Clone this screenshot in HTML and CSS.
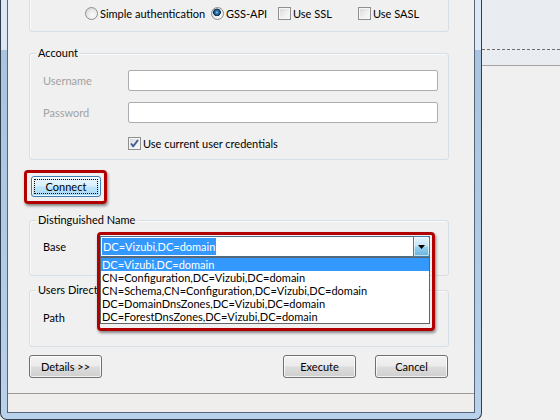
FILE: index.html
```html
<!DOCTYPE html>
<html>
<head>
<meta charset="utf-8">
<title>LDAP connection</title>
<link rel="stylesheet" href="styles.css">
</head>
<body>
<div class="window">
  <div class="client">
    <div class="group group-auth">
      <div class="auth-row">
        <label class="opt"><span class="radio"></span>Simple authentication</label>
        <label class="opt"><span class="radio on"></span>GSS-API</label>
        <label class="opt"><span class="check"></span>Use SSL</label>
        <label class="opt"><span class="check"></span>Use SASL</label>
      </div>
    </div>

    <div class="group group-account">
      <span class="legend">Account</span>
      <div class="field first"><span class="lbl disabled">Username</span><span class="input"></span></div>
      <div class="field second"><span class="lbl disabled">Password</span><span class="input"></span></div>
      <div class="field checkrow"><span class="lbl"></span><label class="opt"><span class="check"><svg width="11" height="11" viewBox="0 0 11 11"><polyline points="2,5.5 4.3,8.3 9,2" fill="none" stroke="#3f5997" stroke-width="1.9" stroke-linejoin="round"/></svg></span>Use current user credentials</label></div>
    </div>

    <div class="connect-row">
      <button class="btn btn-hot">Connect</button>
      <span class="ring ring-connect"></span>
    </div>

    <div class="group group-dn">
      <span class="legend">Distinguished Name</span>
      <div class="row">
        <span class="lbl lbl-short">Base</span>
        <div class="combo">
          <span class="sel">DC=Vizubi,DC=domain</span>
          <span class="drop"><svg width="7" height="4" viewBox="0 0 7 4"><polygon points="0,0 7,0 3.5,4" fill="#000"/></svg></span>
          <div class="list">
            <div class="item on">DC=Vizubi,DC=domain</div>
            <div class="item">CN=Configuration,DC=Vizubi,DC=domain</div>
            <div class="item">CN=Schema,CN=Configuration,DC=Vizubi,DC=domain</div>
            <div class="item">DC=DomainDnsZones,DC=Vizubi,DC=domain</div>
            <div class="item">DC=ForestDnsZones,DC=Vizubi,DC=domain</div>
          </div>
          <span class="ring ring-combo"></span>
        </div>
      </div>
    </div>

    <div class="group group-users">
      <span class="legend">Users Directory</span>
      <div class="row users-row">
        <span class="lbl lbl-short">Path</span>
      </div>
    </div>

    <div class="buttons">
      <button class="btn">Details &gt;&gt;</button>
      <button class="btn push">Execute</button>
      <button class="btn">Cancel</button>
    </div>

    <div class="status"></div>
  </div>
</div>
<div class="side">
  <div class="band"><div class="dash"></div></div>
</div>
</body>
</html>
```

FILE: styles.css
```css
* { box-sizing: border-box; }

html, body { margin: 0; height: 100%; }

body {
  background: #f0f0f0;
  font-family: Lato, "Open Sans", sans-serif;
  font-size: 11px;
  color: #000;
  display: flex;
  align-items: flex-start;
  overflow: hidden;
}

/* window frame */
.window {
  width: 482px;
  height: 420px;
  flex: none;
  border: 1px solid #2f3d4c;
  border-top: 0;
  border-radius: 0 0 7px 7px;
  padding: 0 6px 6px;
  background: linear-gradient(#dce8f5 0, #dce8f5 50px, #a8c4e1 50px, #b9d1ea 100%);
  display: flex;
  flex-direction: column;
}

.client {
  flex: 1;
  border: 1px solid #56657a;
  border-top: 0;
  background: #f0f0f0;
  display: flex;
  flex-direction: column;
}

.side { flex: 1; }

.band {
  height: 66px;
  background: #e9ecf0;
  border-bottom: 1px solid #a3a3a3;
  padding-top: 49px;
}

.dash { border-top: 1px dashed #6e6e6e; }

/* group boxes */
.group {
  flex: none;
  margin-left: 21px;
  width: 420px;
  border: 1px solid #d5dfe5;
  border-radius: 3px;
  box-shadow: inset 1px 1px 0 #fafafa;
}

.legend {
  display: block;
  width: max-content;
  height: 14px;
  line-height: 14px;
  margin: -8px 0 0 -7px;
  padding: 0 2px;
  background: #f0f0f0;
  white-space: nowrap;
}

.group-auth {
  margin-top: -10px;
  padding: 15px 0 11px 55px;
}

.auth-row {
  display: grid;
  grid-template-columns: 126px 67px 80px auto;
  height: 14px;
  align-items: center;
}

.opt {
  display: flex;
  align-items: center;
  white-space: nowrap;
}

.radio {
  flex: none;
  width: 13px;
  height: 13px;
  margin-right: 2px;
  border-radius: 50%;
  border: 1px solid #8e8f8f;
  background: radial-gradient(circle at 60% 65%, #fbfbfb 0, #ececec 45%, #cdcdcd 100%);
}

.radio.on {
  background:
    radial-gradient(circle at 45% 40%, #8fd0f5 0, #2f86c4 1.3px, #1b4f80 2.6px, #0d2d4d 3.6px, rgba(13,45,77,0) 4.1px),
    radial-gradient(circle at 60% 65%, #fbfbfb 0, #ececec 45%, #cdcdcd 100%);
}

.check {
  flex: none;
  width: 13px;
  height: 13px;
  margin-right: 2px;
  border: 1px solid #8e8f8f;
  background: linear-gradient(135deg, #d7d7d7 0, #f0f0f0 60%, #fbfbfb 100%);
  box-shadow: inset 0 0 0 1px #f6f6f6;
  display: flex;
  align-items: center;
  justify-content: center;
}

/* account */
.group-account {
  margin-top: 21px;
  padding: 0 0 9px 13px;
}

.field {
  display: flex;
  align-items: center;
  height: 21px;
}

.field.first { margin-top: 10px; }
.field.second { margin-top: 11px; }
.field.checkrow { margin-top: 13px; height: 14px; }

.lbl { flex: none; width: 85px; }
.lbl-short { width: 57px; }
.disabled { color: #a2a2a2; }

.input {
  width: 310px;
  height: 21px;
  border: 1px solid #abadb3;
  border-radius: 2px;
  background: #fff;
}

/* buttons */
.btn {
  flex: none;
  font: inherit;
  color: #000;
  width: 73px;
  height: 23px;
  padding: 0;
  border: 1px solid #707070;
  border-radius: 3px;
  background: linear-gradient(#f2f2f2 0, #ebebeb 48%, #dddddd 52%, #cfcfcf 100%);
  box-shadow: inset 0 0 0 1px rgba(255,255,255,0.75);
}

.connect-row {
  position: relative;
  flex: none;
  margin: 16px 0 0 23px;
  width: 70px;
  height: 21px;
}

.btn-hot {
  width: 70px;
  height: 21px;
  border-color: #3c7fb1;
  background: linear-gradient(#eaf6fd 0, #d9f0fc 48%, #bee6fd 52%, #a7d9f5 100%);
  outline: 1px dotted #000;
  outline-offset: -4px;
}

.ring {
  position: absolute;
  border: 3px solid #b00000;
  border-radius: 4px;
  box-shadow: 1px 2px 3px rgba(0,0,0,0.45);
  z-index: 3;
}

.ring-connect {
  left: -7px;
  top: -6px;
  width: 83px;
  height: 34px;
}

/* distinguished name */
.group-dn {
  margin-top: 23px;
  padding: 0 0 18px 13px;
}

.row {
  display: flex;
  align-items: center;
  height: 21px;
  margin-top: 9px;
}

.combo {
  position: relative;
  width: 330px;
  height: 21px;
  border: 1px solid #4a6d8c;
  background: #fff;
  display: flex;
  align-items: center;
}

.sel {
  margin-left: 1px;
  padding: 0 1px;
  height: 17px;
  line-height: 17px;
  background: #3399ff;
  color: #fff;
}

.drop {
  margin: -1px -1px -1px auto;
  width: 17px;
  height: 21px;
  border: 1px solid #3c7fb1;
  border-radius: 0 2px 2px 0;
  background: linear-gradient(#e5f4fc 0, #c4e5f6 48%, #98d1ef 52%, #68b3db 100%);
  box-shadow: inset 0 0 0 1px rgba(255,255,255,0.6);
  display: flex;
  align-items: center;
  justify-content: center;
}

.list {
  position: absolute;
  left: -1px;
  top: 20px;
  width: 330px;
  border: 1px solid #646464;
  background: #fff;
  z-index: 2;
}

.item {
  height: 13px;
  line-height: 13px;
  padding-left: 1px;
  white-space: nowrap;
}

.item.on { background: #3399ff; color: #fff; }

.ring-combo {
  left: -4px;
  top: -5px;
  width: 338px;
  height: 99px;
}

/* users directory */
.group-users {
  margin-top: 14px;
  padding: 0 0 18px 13px;
}

.users-row { margin-top: 10px; }

/* bottom buttons */
.buttons {
  flex: none;
  display: flex;
  gap: 19px;
  margin: 8px 0 0 21px;
  width: 419px;
}

.buttons .push { margin-left: auto; }

.status {
  flex: none;
  margin-top: auto;
  height: 19px;
  border-top: 1px solid #999;
  background: #f0eded;
}
```
